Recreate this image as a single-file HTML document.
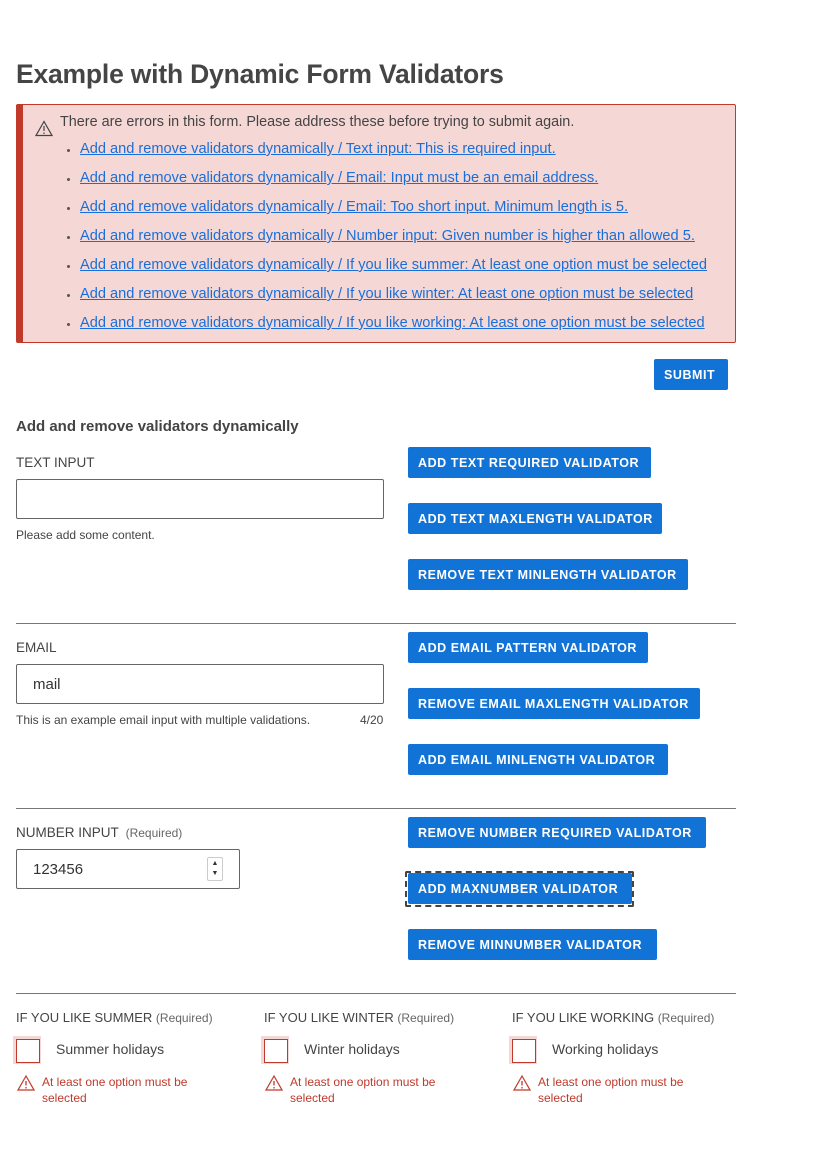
<!DOCTYPE html>
<html><head><meta charset="utf-8"><style>
*{box-sizing:border-box;margin:0;padding:0}
body{width:814px;height:1154px;background:#fff;font-family:"Liberation Sans",sans-serif;color:#444;position:relative;overflow:hidden}
.a{position:absolute}
h1{position:absolute;left:16px;top:59px;font-size:26.5px;font-weight:600;color:#454545;letter-spacing:-0.2px}
.err{position:absolute;left:16px;top:104px;width:720px;height:239px;background:#f5d8d5;border:1px solid #c0392b;border-left:7px solid #c0392b;border-radius:2px}
.err .t{position:absolute;left:37px;top:9px;font-size:14.4px;color:#444}
.err a{position:absolute;left:57px;font-size:14.6px;color:#1a6ed8;text-decoration:underline;white-space:nowrap}
.err .d{position:absolute;left:44px;width:3px;height:3px;background:#555;border-radius:50%}
.btn{position:absolute;height:31px;background:#1273d6;color:#fff;font-weight:bold;font-size:12.5px;letter-spacing:0.55px;line-height:32px;padding:0 10px;border-radius:2px;white-space:nowrap}
.lbl{position:absolute;font-size:13.5px;color:#444}
.req{font-size:12px;color:#666}
.inp{position:absolute;border:1px solid #666;border-radius:2px;height:40px;font-size:15px;line-height:40px;padding-left:16px;color:#333}
.hint{position:absolute;font-size:12px;color:#444}
.hr{position:absolute;left:16px;width:720px;height:1px;background:#777}
.cb{position:absolute;width:28px;height:28px;background:#f5d8d5}
.cb:after{content:"";position:absolute;left:3px;top:3px;width:22px;height:22px;border:1px solid #c0392b;background:#fff}
.em{position:absolute;font-size:12px;color:#c0392b;line-height:16px;width:170px}
</style></head><body>
<h1>Example with Dynamic Form Validators</h1>
<div class="err">
<svg class="a" style="left:12px;top:15px" width="18" height="17" viewBox="0 0 18 17"><path d="M9 1.5L1 15.5H17Z" fill="none" stroke="#444" stroke-width="1.2"/><path d="M9 6v5M9 12.5v1.5" stroke="#444" stroke-width="1.2"/></svg>
<div class="t">There are errors in this form. Please address these before trying to submit again.</div>
<span class="d" style="top:44px"></span><a style="top:36px">Add and remove validators dynamically / Text input: This is required input.</a>
<span class="d" style="top:73px"></span><a style="top:65px">Add and remove validators dynamically / Email: Input must be an email address.</a>
<span class="d" style="top:102px"></span><a style="top:94px">Add and remove validators dynamically / Email: Too short input. Minimum length is 5.</a>
<span class="d" style="top:131px"></span><a style="top:123px">Add and remove validators dynamically / Number input: Given number is higher than allowed 5.</a>
<span class="d" style="top:160px"></span><a style="top:152px">Add and remove validators dynamically / If you like summer: At least one option must be selected</a>
<span class="d" style="top:189px"></span><a style="top:181px">Add and remove validators dynamically / If you like winter: At least one option must be selected</a>
<span class="d" style="top:218px"></span><a style="top:210px">Add and remove validators dynamically / If you like working: At least one option must be selected</a>
</div>
<div class="btn" style="left:654px;top:359px;width:74px">SUBMIT</div>
<div class="a" style="left:16px;top:418px;font-size:15px;font-weight:bold;color:#444">Add and remove validators dynamically</div>

<div class="lbl" style="left:16px;top:455px">TEXT INPUT</div>
<div class="inp" style="left:16px;top:479px;width:368px"></div>
<div class="hint" style="left:16px;top:528px">Please add some content.</div>
<div class="btn" style="left:408px;top:447px;width:243px">ADD TEXT REQUIRED VALIDATOR</div>
<div class="btn" style="left:408px;top:503px;width:254px">ADD TEXT MAXLENGTH VALIDATOR</div>
<div class="btn" style="left:408px;top:559px;width:280px">REMOVE TEXT MINLENGTH VALIDATOR</div>
<div class="hr" style="top:623px"></div>

<div class="lbl" style="left:16px;top:640px">EMAIL</div>
<div class="inp" style="left:16px;top:664px;width:368px">mail</div>
<div class="hint" style="left:16px;top:713px">This is an example email input with multiple validations.</div>
<div class="hint" style="left:360px;top:713px">4/20</div>
<div class="btn" style="left:408px;top:632px;width:240px">ADD EMAIL PATTERN VALIDATOR</div>
<div class="btn" style="left:408px;top:688px;width:292px">REMOVE EMAIL MAXLENGTH VALIDATOR</div>
<div class="btn" style="left:408px;top:744px;width:260px">ADD EMAIL MINLENGTH VALIDATOR</div>
<div class="hr" style="top:808px"></div>

<div class="lbl" style="left:16px;top:825px">NUMBER INPUT <span class="req">&nbsp;(Required)</span></div>
<div class="inp" style="left:16px;top:849px;width:224px">123456</div>
<div class="a" style="left:207px;top:857px;width:16px;height:24px;border:1px solid #ccc;border-radius:2px;font-size:7px;line-height:10px;text-align:center;color:#333;padding-top:1px">▲<br>▼</div>
<div class="btn" style="left:408px;top:817px;width:298px">REMOVE NUMBER REQUIRED VALIDATOR</div>
<div class="a" style="left:405px;top:871px;width:229px;height:36px;border:2px dashed #444;border-radius:2px"></div>
<div class="btn" style="left:408px;top:873px;width:224px">ADD MAXNUMBER VALIDATOR</div>
<div class="btn" style="left:408px;top:929px;width:249px">REMOVE MINNUMBER VALIDATOR</div>
<div class="hr" style="top:993px"></div>

<div class="lbl" style="left:16px;top:1010px;font-size:13px">IF YOU LIKE SUMMER <span class="req">(Required)</span></div>
<div class="lbl" style="left:264px;top:1010px;font-size:13px">IF YOU LIKE WINTER <span class="req">(Required)</span></div>
<div class="lbl" style="left:512px;top:1010px;font-size:13px">IF YOU LIKE WORKING <span class="req">(Required)</span></div>
<div class="cb" style="left:13px;top:1036px"></div><div class="lbl" style="left:56px;top:1041px;font-size:14px">Summer holidays</div>
<div class="cb" style="left:261px;top:1036px"></div><div class="lbl" style="left:304px;top:1041px;font-size:14px">Winter holidays</div>
<div class="cb" style="left:509px;top:1036px"></div><div class="lbl" style="left:552px;top:1041px;font-size:14px">Working holidays</div>
<svg class="a" style="left:17px;top:1075px" width="18" height="16" viewBox="0 0 18 16"><path d="M9 1L1 15H17Z" fill="none" stroke="#c0392b" stroke-width="1.2"/><path d="M9 6v4.5M9 12v1.5" stroke="#c0392b" stroke-width="1.3"/></svg>
<svg class="a" style="left:265px;top:1075px" width="18" height="16" viewBox="0 0 18 16"><path d="M9 1L1 15H17Z" fill="none" stroke="#c0392b" stroke-width="1.2"/><path d="M9 6v4.5M9 12v1.5" stroke="#c0392b" stroke-width="1.3"/></svg>
<svg class="a" style="left:513px;top:1075px" width="18" height="16" viewBox="0 0 18 16"><path d="M9 1L1 15H17Z" fill="none" stroke="#c0392b" stroke-width="1.2"/><path d="M9 6v4.5M9 12v1.5" stroke="#c0392b" stroke-width="1.3"/></svg>
<div class="em" style="left:42px;top:1074px">At least one option must be selected</div>
<div class="em" style="left:290px;top:1074px">At least one option must be selected</div>
<div class="em" style="left:538px;top:1074px">At least one option must be selected</div>
</body></html>
